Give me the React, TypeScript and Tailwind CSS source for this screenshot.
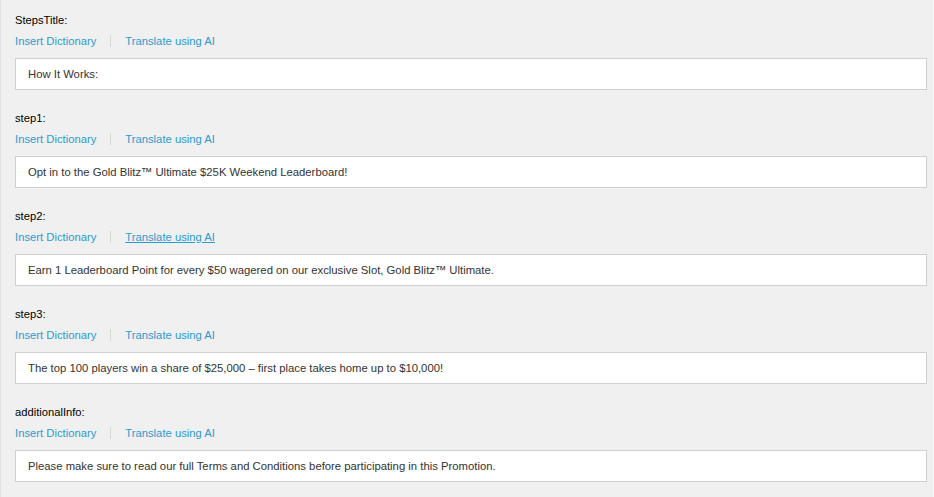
// Translation fields panel: each key shows its label, two helper links and the
// current value in a bordered box.

const FIELDS: Array<{ key: string; value: string; hover?: boolean }> = [
  { key: "StepsTitle", value: "How It Works:" },
  { key: "step1", value: "Opt in to the Gold Blitz™ Ultimate $25K Weekend Leaderboard!" },
  {
    key: "step2",
    value: "Earn 1 Leaderboard Point for every $50 wagered on our exclusive Slot, Gold Blitz™ Ultimate.",
    hover: true,
  },
  { key: "step3", value: "The top 100 players win a share of $25,000 – first place takes home up to $10,000!" },
  { key: "additionalInfo", value: "Please make sure to read our full Terms and Conditions before participating in this Promotion." },
];

export default function App() {
  return (
    <div className="flex h-[497px] w-[934px] overflow-hidden bg-[#f0f0f0] font-['Liberation_Sans',Arial,sans-serif]">
      <div className="w-px shrink-0 bg-[#e2e2e2]" />
      <div className="flex flex-1 flex-col pl-[14px] pr-[6px] pt-[12px]">
        {FIELDS.map((f) => (
          <div key={f.key} className="mb-[20px]">
            <div className="text-[11.2px] leading-4 text-black">{f.key}:</div>
            <div className="mt-[5px] flex items-center text-[11.25px] leading-4 text-[#2b9bd0]">
              <span>Insert Dictionary</span>
              <span className="ml-[14px] mr-[14px] h-[12px] w-px bg-[#d6d6d6]" />
              <span className={f.hover ? "underline" : ""}>Translate using AI</span>
            </div>
            <div className="mt-[9px] flex h-[32px] items-center border border-[#cfcfcf] bg-white px-[12px] text-[11.3px] text-[#333]">
              {f.value}
            </div>
          </div>
        ))}
      </div>
      <div className="w-px shrink-0 bg-[#f8f8f8]" />
    </div>
  );
}
